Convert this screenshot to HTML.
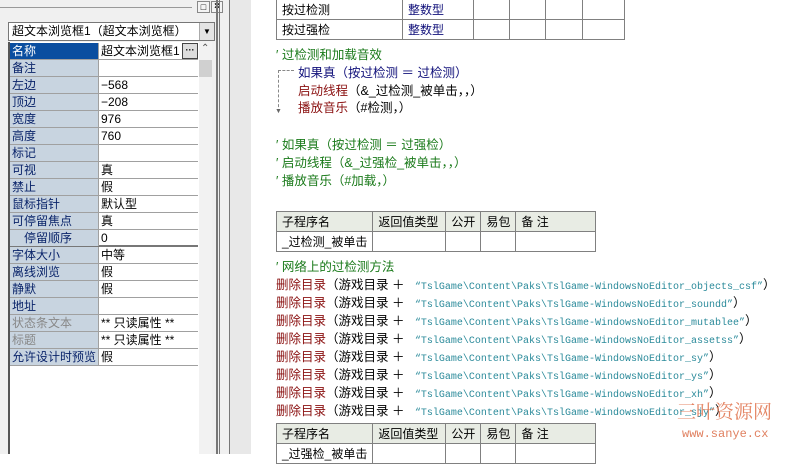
<!DOCTYPE html><html><head><meta charset="utf-8"><style>
*{margin:0;padding:0;box-sizing:border-box}
body{width:785px;height:454px;overflow:hidden;background:#fff;font-family:"Liberation Sans","Noto Sans CJK SC",sans-serif;font-size:12px;position:relative}
.a{position:absolute;white-space:nowrap}
.r{position:absolute;left:10px;width:188px;height:17px;border-bottom:1px solid #a0a0a0}
.r .n{position:absolute;left:0;top:0;width:89px;height:16px;background:#c8d4e0;color:#0a246a;padding-left:2px;line-height:16px;border-right:1px solid #a0a0a0}
.r .v{position:absolute;left:91px;top:0;line-height:16px;color:#000}
table{position:absolute;border-collapse:collapse}
td{border:1px solid #808080;height:20px;padding:0 5px;font-size:12px;white-space:nowrap}
.h td{background:#e8ece4}
.g{color:#1a7a1a}.b{color:#10107a}.d{color:#8a1010}.s{color:#2a8a9a;font-family:"Liberation Mono",monospace;font-size:10px}
.ln{position:absolute;left:276px;white-space:nowrap;font-size:12.5px}
</style></head><body>
<div class="a" style="left:0;top:0;width:251px;height:454px;background:#f0f0f0"></div>
<div class="a" style="left:0;top:7px;width:192px;height:1px;background:#999"></div>
<div class="a" style="left:197px;top:1px;width:13px;height:12px;border:1px solid #888;background:#f4f4f4;font-size:9px;text-align:center;line-height:10px">□</div>
<div class="a" style="left:211px;top:1px;width:12px;height:12px;border:1px solid #888;background:#f4f4f4;font-size:10px;font-weight:bold;text-align:center;line-height:10px">×</div>
<div class="a" style="left:8px;top:22px;width:207px;height:19px;border:1px solid #777;background:#fff;line-height:17px;padding-left:3px">超文本浏览框1（超文本浏览框）</div>
<div class="a" style="left:199px;top:23px;width:15px;height:17px;background:#e4e4e4;border-left:1px solid #aaa;font-size:8px;text-align:center;line-height:17px">▼</div>
<div class="a" style="left:8px;top:42px;width:2px;height:412px;background:#555"></div>
<div class="a" style="left:10px;top:42px;width:189px;height:412px;background:#fff"></div>
<div class="a" style="left:199px;top:42px;width:13px;height:412px;background:#f2f2f2"></div>
<div class="a" style="left:199px;top:60px;width:13px;height:17px;background:#d0d0d0"></div>
<div class="a" style="left:201px;top:43px;font-size:10px;color:#555">⌃</div>
<div class="a" style="left:216px;top:0;width:2px;height:454px;background:#777"></div>
<div class="a" style="left:219px;top:0;width:1px;height:454px;background:#777"></div>
<div class="a" style="left:229px;top:0;width:1px;height:454px;background:#777"></div>
<div class="a" style="left:230px;top:0;width:21px;height:454px;background:#e8e8e8"></div>

<div class="r" style="top:43px"><div class="n" style="background:#0a4ea0;color:#fff">名称</div><div class="v">超文本浏览框1</div></div>
<div class="a" style="left:182px;top:43px;width:16px;height:16px;border:1px solid #444;background:#ddd;font-size:9px;font-weight:bold;text-align:center;line-height:12px">···</div>
<div class="r" style="top:60px"><div class="n">备注</div></div>
<div class="r" style="top:77px"><div class="n">左边</div><div class="v">−568</div></div>
<div class="r" style="top:94px"><div class="n">顶边</div><div class="v">−208</div></div>
<div class="r" style="top:111px"><div class="n">宽度</div><div class="v">976</div></div>
<div class="r" style="top:128px"><div class="n">高度</div><div class="v">760</div></div>
<div class="r" style="top:145px"><div class="n">标记</div></div>
<div class="r" style="top:162px"><div class="n">可视</div><div class="v">真</div></div>
<div class="r" style="top:179px"><div class="n">禁止</div><div class="v">假</div></div>
<div class="r" style="top:196px"><div class="n">鼠标指针</div><div class="v">默认型</div></div>
<div class="r" style="top:213px"><div class="n">可停留焦点</div><div class="v">真</div></div>
<div class="r" style="top:230px;border-bottom:2px solid #777"><div class="n" style="padding-left:14px">停留顺序</div><div class="v">0</div></div>
<div class="r" style="top:247px"><div class="n">字体大小</div><div class="v">中等</div></div>
<div class="r" style="top:264px"><div class="n">离线浏览</div><div class="v">假</div></div>
<div class="r" style="top:281px"><div class="n">静默</div><div class="v">假</div></div>
<div class="r" style="top:298px"><div class="n">地址</div></div>
<div class="r" style="top:315px"><div class="n" style="color:#888">状态条文本</div><div class="v">** 只读属性 **</div></div>
<div class="r" style="top:332px"><div class="n" style="color:#888">标题</div><div class="v">** 只读属性 **</div></div>
<div class="r" style="top:349px"><div class="n">允许设计时预览</div><div class="v">假</div></div>

<table style="left:276px;top:-1px"><tr><td style="width:126px">按过检测</td><td class="b" style="width:71px">整数型</td><td style="width:36px"></td><td style="width:36px"></td><td style="width:37px"></td><td style="width:42px"></td></tr><tr><td>按过强检</td><td class="b">整数型</td><td></td><td></td><td></td><td></td></tr></table>
<div class="ln g" style="top:44px">′ 过检测和加载音效</div>
<div class="a" style="left:278px;top:70px;width:1px;height:42px;border-left:1px dashed #888"></div>
<div class="a" style="left:278px;top:70px;width:16px;height:1px;border-top:1px dashed #888"></div>
<div class="a" style="left:275px;top:108px;font-size:7px;color:#666">▼</div>
<div class="ln b" style="left:298px;top:62px">如果真（按过检测 ＝ 过检测）</div>
<div class="ln" style="left:298px;top:80px"><span class="d">启动线程</span>（&amp;_过检测_被单击，，）</div>
<div class="ln" style="left:298px;top:97px"><span class="d">播放音乐</span>（#检测，）</div>
<div class="ln g" style="top:134px">′ 如果真（按过检测 ＝ 过强检）</div>
<div class="ln g" style="top:152px">′ 启动线程（&amp;_过强检_被单击，，）</div>
<div class="ln g" style="top:170px">′ 播放音乐（#加载，）</div>

<table style="left:276px;top:211px"><tr class="h"><td style="width:94px">子程序名</td><td style="width:73px">返回值类型</td><td style="width:35px">公开</td><td style="width:35px">易包</td><td style="width:80px">备 注</td></tr><tr><td>_过检测_被单击</td><td></td><td></td><td></td><td></td></tr></table>
<div class="ln g" style="top:256px">′ 网络上的过检测方法</div>
<div class="ln" style="top:274px"><span class="d">删除目录</span>（游戏目录 ＋&nbsp;&nbsp; <span class="s">“TslGame\Content\Paks\TslGame-WindowsNoEditor_objects_csf”</span>）</div>
<div class="ln" style="top:292px"><span class="d">删除目录</span>（游戏目录 ＋&nbsp;&nbsp; <span class="s">“TslGame\Content\Paks\TslGame-WindowsNoEditor_soundd”</span>）</div>
<div class="ln" style="top:310px"><span class="d">删除目录</span>（游戏目录 ＋&nbsp;&nbsp; <span class="s">“TslGame\Content\Paks\TslGame-WindowsNoEditor_mutablee”</span>）</div>
<div class="ln" style="top:328px"><span class="d">删除目录</span>（游戏目录 ＋&nbsp;&nbsp; <span class="s">“TslGame\Content\Paks\TslGame-WindowsNoEditor_assetss”</span>）</div>
<div class="ln" style="top:346px"><span class="d">删除目录</span>（游戏目录 ＋&nbsp;&nbsp; <span class="s">“TslGame\Content\Paks\TslGame-WindowsNoEditor_sy”</span>）</div>
<div class="ln" style="top:364px"><span class="d">删除目录</span>（游戏目录 ＋&nbsp;&nbsp; <span class="s">“TslGame\Content\Paks\TslGame-WindowsNoEditor_ys”</span>）</div>
<div class="ln" style="top:382px"><span class="d">删除目录</span>（游戏目录 ＋&nbsp;&nbsp; <span class="s">“TslGame\Content\Paks\TslGame-WindowsNoEditor_xh”</span>）</div>
<div class="ln" style="top:400px"><span class="d">删除目录</span>（游戏目录 ＋&nbsp;&nbsp; <span class="s">“TslGame\Content\Paks\TslGame-WindowsNoEditor_sjy”</span>）</div>
<div class="a" style="left:677px;top:397px;font-size:19px;color:#e0704a;opacity:.85;font-family:'Noto Serif CJK SC',serif">三叶资源网</div>
<div class="a" style="left:682px;top:427px;font-size:12px;color:#e08060;font-family:'Liberation Mono',monospace">www.sanye.cx</div>
<table style="left:276px;top:423px"><tr class="h"><td style="width:94px">子程序名</td><td style="width:73px">返回值类型</td><td style="width:35px">公开</td><td style="width:35px">易包</td><td style="width:80px">备 注</td></tr><tr><td>_过强检_被单击</td><td></td><td></td><td></td><td></td></tr></table>
</body></html>
